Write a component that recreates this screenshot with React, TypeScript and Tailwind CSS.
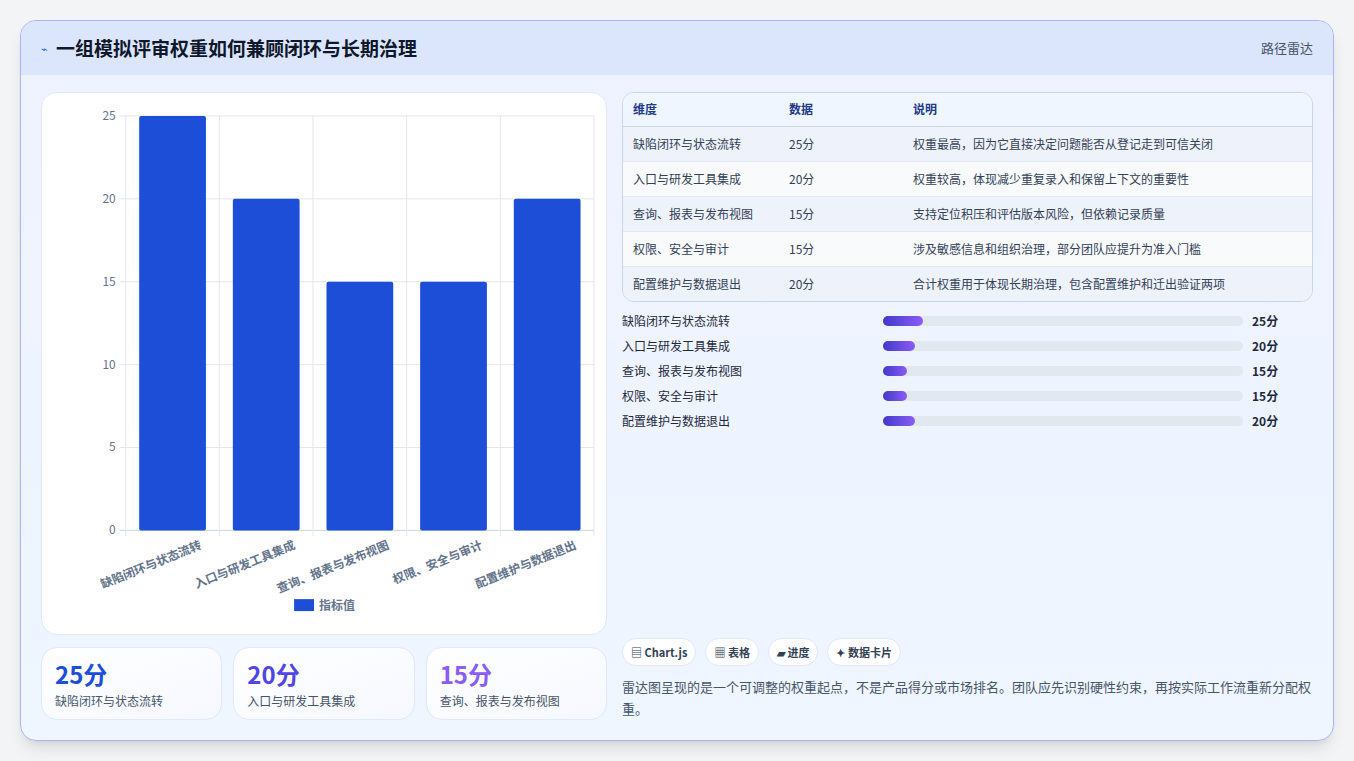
const font = { fontFamily: '"Noto Sans CJK SC", "Noto Sans", sans-serif' };

const rows = [
  { name: "缺陷闭环与状态流转", value: 25, note: "权重最高，因为它直接决定问题能否从登记走到可信关闭" },
  { name: "入口与研发工具集成", value: 20, note: "权重较高，体现减少重复录入和保留上下文的重要性" },
  { name: "查询、报表与发布视图", value: 15, note: "支持定位积压和评估版本风险，但依赖记录质量" },
  { name: "权限、安全与审计", value: 15, note: "涉及敏感信息和组织治理，部分团队应提升为准入门槛" },
  { name: "配置维护与数据退出", value: 20, note: "合计权重用于体现长期治理，包含配置维护和迁出验证两项" },
];

function BarChart() {
  const left = 84, right = 554, top = 23, bottom = 439;
  const step = (right - left) / 5;
  const y = (v: number) => bottom - (v / 25) * (bottom - top);
  return (
    <svg viewBox="0 0 566 543" className="h-full w-full">
      {[0, 5, 10, 15, 20, 25].map((t) => (
        <g key={t}>
          <line x1={left - 6} x2={right} y1={y(t)} y2={y(t)} stroke={t === 0 ? "#cbd5e1" : "#e5e7eb"} />
          <text x={left - 10} y={y(t) + 4} textAnchor="end" fontSize="12" fill="#64748b">{t}</text>
        </g>
      ))}
      {[0, 1, 2, 3, 4, 5].map((i) => (
        <line key={i} x1={left + i * step} x2={left + i * step} y1={top} y2={bottom + 6} stroke="#e5e7eb" />
      ))}
      {rows.map((r, i) => {
        const cx = left + step * (i + 0.5);
        return (
          <g key={r.name}>
            <rect x={cx - 33.5} y={y(r.value)} width={67} height={bottom - y(r.value)} fill="#1d4ed8" rx={2} />
            <text
              transform={`translate(${cx + 30},${bottom + 18}) rotate(-22)`}
              textAnchor="end"
              fontSize="12"
              fontWeight="600"
              fill="#64748b"
            >
              {r.name}
            </text>
          </g>
        );
      })}
      <rect x={253} y={508} width={20} height={12} fill="#1d4ed8" />
      <text x={278} y={519} fontSize="12" fill="#64748b" fontWeight="600">指标值</text>
    </svg>
  );
}

export default function App() {
  return (
    <div className="min-h-screen bg-[#f3f4f6] p-5" style={font}>
      <div className="flex h-[721px] flex-col overflow-hidden rounded-2xl border border-[#a5b4fc] bg-gradient-to-b from-[#eef2ff] to-[#eff6ff] shadow-lg">
        <div className="flex h-[56px] items-center justify-between bg-[#dbe6fd] px-5">
          <div className="flex items-center gap-2">
            <span className="text-[11px] text-[#2563eb]">⌁</span>
            <h1 className="text-[19px] font-bold text-[#0f172a]">一组模拟评审权重如何兼顾闭环与长期治理</h1>
          </div>
          <span className="text-[13px] text-[#475569]">路径雷达</span>
        </div>
        <div className="flex flex-1 gap-[15px] px-5 pb-5 pt-[17px]">
          <div className="flex w-[566px] flex-col gap-3">
            <div className="h-[543px] rounded-2xl border border-[#e0e7ff] bg-white">
              <BarChart />
            </div>
            <div className="grid grid-cols-3 gap-[11px]">
              {[
                { v: "25分", l: rows[0].name, c: "text-[#1d4ed8]" },
                { v: "20分", l: rows[1].name, c: "text-[#4f46e5]" },
                { v: "15分", l: rows[2].name, c: "text-[#8b5cf6]" },
              ].map((s) => (
                <div key={s.l} className="h-[73px] rounded-2xl border border-[#e0e7ff] bg-gradient-to-br from-white to-[#f5f8ff] px-[13px] pt-[10px]">
                  <div className={`text-[24px] font-bold leading-[32px] ${s.c}`}>{s.v}</div>
                  <div className="mt-[2px] text-[12px] text-[#475569]">{s.l}</div>
                </div>
              ))}
            </div>
          </div>
          <div className="flex flex-1 flex-col">
            <div className="overflow-hidden rounded-xl border border-[#cbd5e1]">
              <table className="w-full text-left text-[12px]">
                <thead>
                  <tr className="h-[33px] border-b border-[#cbd5e1] bg-[#eff6ff] text-[#1e3a8a]">
                    <th className="w-[166px] pl-[10px] font-semibold">维度</th>
                    <th className="w-[124px] font-semibold">数据</th>
                    <th className="font-semibold">说明</th>
                  </tr>
                </thead>
                <tbody>
                  {rows.map((r, i) => (
                    <tr key={r.name} className={`h-[35px] border-b border-[#e2e8f0] last:border-0 text-[#334155] ${i % 2 ? "bg-[#f8fafc]" : "bg-[#eef2fb]"}`}>
                      <td className="pl-[10px]">{r.name}</td>
                      <td>{r.value}分</td>
                      <td>{r.note}</td>
                    </tr>
                  ))}
                </tbody>
              </table>
            </div>
            <div className="mt-[10px] flex flex-col gap-[7px]">
              {rows.map((r) => (
                <div key={r.name} className="flex h-[18px] items-center text-[12px] text-[#1e293b]">
                  <span className="w-[261px]">{r.name}</span>
                  <div className="h-[10px] w-[360px] rounded-full bg-[#e2e8f0]">
                    <div className="h-full rounded-full bg-gradient-to-r from-[#4338ca] to-[#8b5cf6]" style={{ width: `${(r.value / 225) * 100}%` }} />
                  </div>
                  <span className="ml-[9px] font-bold">{r.value}分</span>
                </div>
              ))}
            </div>
            <div className="mt-auto flex gap-[9px]">
              {["▤ Chart.js", "▦ 表格", "▰ 进度", "✦ 数据卡片"].map((c) => (
                <span key={c} className="flex h-[28px] items-center rounded-full border border-[#e0e7ff] bg-white px-[8px] text-[11px] font-semibold text-[#334155]">{c}</span>
              ))}
            </div>
            <p className="mt-[10px] text-[13px] leading-[22px] text-[#475569]">
              雷达图呈现的是一个可调整的权重起点，不是产品得分或市场排名。团队应先识别硬性约束，再按实际工作流重新分配权重。
            </p>
          </div>
        </div>
      </div>
    </div>
  );
}
